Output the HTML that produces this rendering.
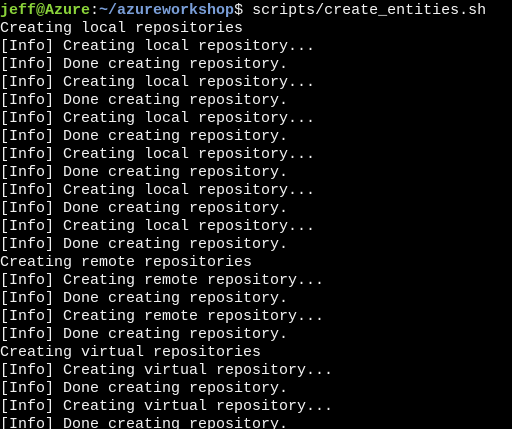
<!DOCTYPE html>
<html><head><style>
html,body{margin:0;padding:0;background:#000;width:512px;height:429px;overflow:hidden}
pre{margin:0;padding:2px 0 0 0;font-family:"Liberation Mono",monospace;font-size:15px;line-height:18px;color:#f2f2f2;white-space:pre}
.g{color:#8bd43a;font-weight:bold}.b{color:#7a9ed8;font-weight:bold}
</style></head><body><pre><span class="g">jeff@Azure</span>:<span class="b">~/azureworkshop</span>$ scripts/create_entities.sh
Creating local repositories
[Info] Creating local repository...
[Info] Done creating repository.
[Info] Creating local repository...
[Info] Done creating repository.
[Info] Creating local repository...
[Info] Done creating repository.
[Info] Creating local repository...
[Info] Done creating repository.
[Info] Creating local repository...
[Info] Done creating repository.
[Info] Creating local repository...
[Info] Done creating repository.
Creating remote repositories
[Info] Creating remote repository...
[Info] Done creating repository.
[Info] Creating remote repository...
[Info] Done creating repository.
Creating virtual repositories
[Info] Creating virtual repository...
[Info] Done creating repository.
[Info] Creating virtual repository...
[Info] Done creating repository.
</pre></body></html>
